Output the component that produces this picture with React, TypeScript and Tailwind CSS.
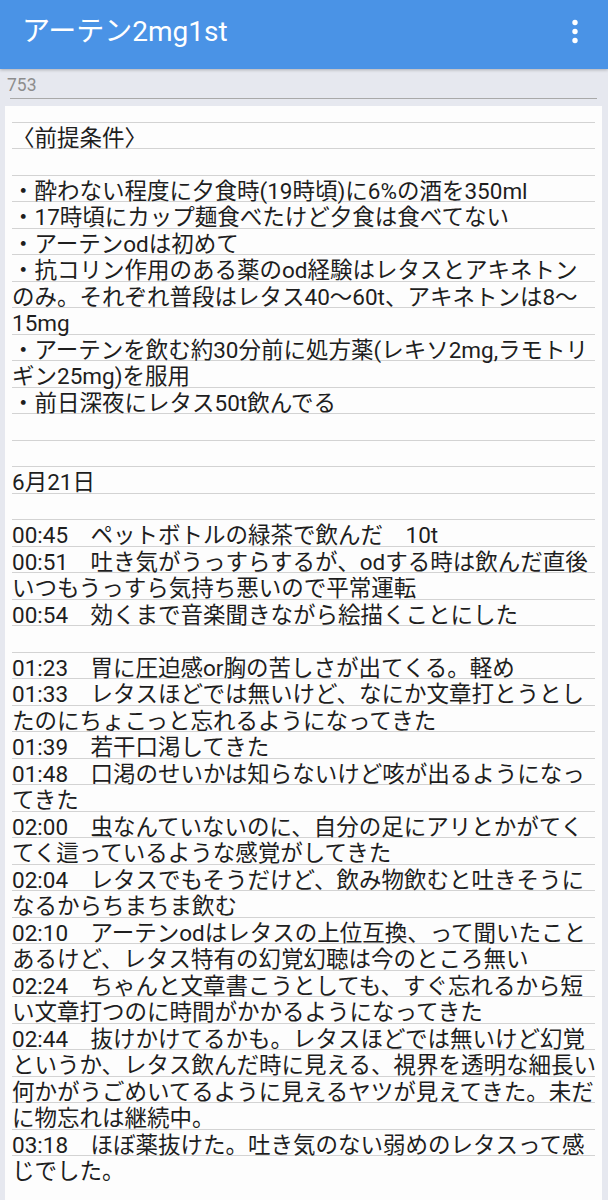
import React from 'react';

// visual lines of the memo, as wrapped on screen
const MEMO_LINES: string[] = [
  '〈前提条件〉',
  '',
  '・酔わない程度に夕食時(19時頃)に6%の酒を350ml',
  '・17時頃にカップ麺食べたけど夕食は食べてない',
  '・アーテンodは初めて',
  '・抗コリン作用のある薬のod経験はレタスとアキネトン',
  'のみ。それぞれ普段はレタス40〜60t、アキネトンは8〜',
  '15mg',
  '・アーテンを飲む約30分前に処方薬(レキソ2mg,ラモトリ',
  'ギン25mg)を服用',
  '・前日深夜にレタス50t飲んでる',
  '',
  '',
  '6月21日',
  '',
  '00:45　ペットボトルの緑茶で飲んだ　10t',
  '00:51　吐き気がうっすらするが、odする時は飲んだ直後',
  'いつもうっすら気持ち悪いので平常運転',
  '00:54　効くまで音楽聞きながら絵描くことにした',
  '',
  '01:23　胃に圧迫感or胸の苦しさが出てくる。軽め',
  '01:33　レタスほどでは無いけど、なにか文章打とうとし',
  'たのにちょこっと忘れるようになってきた',
  '01:39　若干口渇してきた',
  '01:48　口渇のせいかは知らないけど咳が出るようになっ',
  'てきた',
  '02:00　虫なんていないのに、自分の足にアリとかがてく',
  'てく這っているような感覚がしてきた',
  '02:04　レタスでもそうだけど、飲み物飲むと吐きそうに',
  'なるからちまちま飲む',
  '02:10　アーテンodはレタスの上位互換、って聞いたこと',
  'あるけど、レタス特有の幻覚幻聴は今のところ無い',
  '02:24　ちゃんと文章書こうとしても、すぐ忘れるから短',
  'い文章打つのに時間がかかるようになってきた',
  '02:44　抜けかけてるかも。レタスほどでは無いけど幻覚',
  'というか、レタス飲んだ時に見える、視界を透明な細長い',
  '何かがうごめいてるように見えるヤツが見えてきた。未だ',
  'に物忘れは継続中。',
  '03:18　ほぼ薬抜けた。吐き気のない弱めのレタスって感',
  'じでした。',
];

const FONT = "font-['Roboto','Noto_Sans_CJK_JP',sans-serif]";

const MoreIcon: React.FC = () => (
  <svg width="10" height="26" viewBox="0 0 10 26" fill="#ffffff">
    <circle cx="5" cy="3.5" r="2.7" />
    <circle cx="5" cy="12.5" r="2.7" />
    <circle cx="5" cy="21.5" r="2.7" />
  </svg>
);

const App: React.FC = () => {
  return (
    <div className={`min-h-screen flex flex-col bg-[#e6e8ef] ${FONT}`}>
      {/* App bar */}
      <header className="relative z-10 h-[69px] shrink-0 bg-[#4a93e6] flex items-center justify-between pl-[22px] pr-[28px] pb-[6px] shadow-[0_1px_3px_rgba(0,0,0,0.25)]">
        <h1 className="text-[28px] leading-[34px] text-white">アーテン2mg1st</h1>
        <MoreIcon />
      </header>

      {/* Title field */}
      <div className="pl-[7px] pt-[5.5px] text-[17.5px] leading-[20.5px] text-[#8d8d8d]">753</div>
      <div className="ml-[10px] mr-[11px] mt-[3px] h-px bg-[#a9a9a9]" />

      {/* Lined memo page */}
      <main className="flex-1 mt-[6.5px] ml-[5px] mr-[6px] bg-[#fdfdfd] px-[7px] text-[22.5px] text-[#1e1e1e]">
        <div className="h-[17px] border-b border-[#d3d3d3]" />
        {MEMO_LINES.map((line, i) => (
          <div
            key={i}
            className={`h-[26.5px] leading-[30px] whitespace-pre ${
              i < MEMO_LINES.length - 1 ? 'border-b border-[#d3d3d3]' : ''
            }`}
          >
            {line}
          </div>
        ))}
      </main>
    </div>
  );
};

export default App;
